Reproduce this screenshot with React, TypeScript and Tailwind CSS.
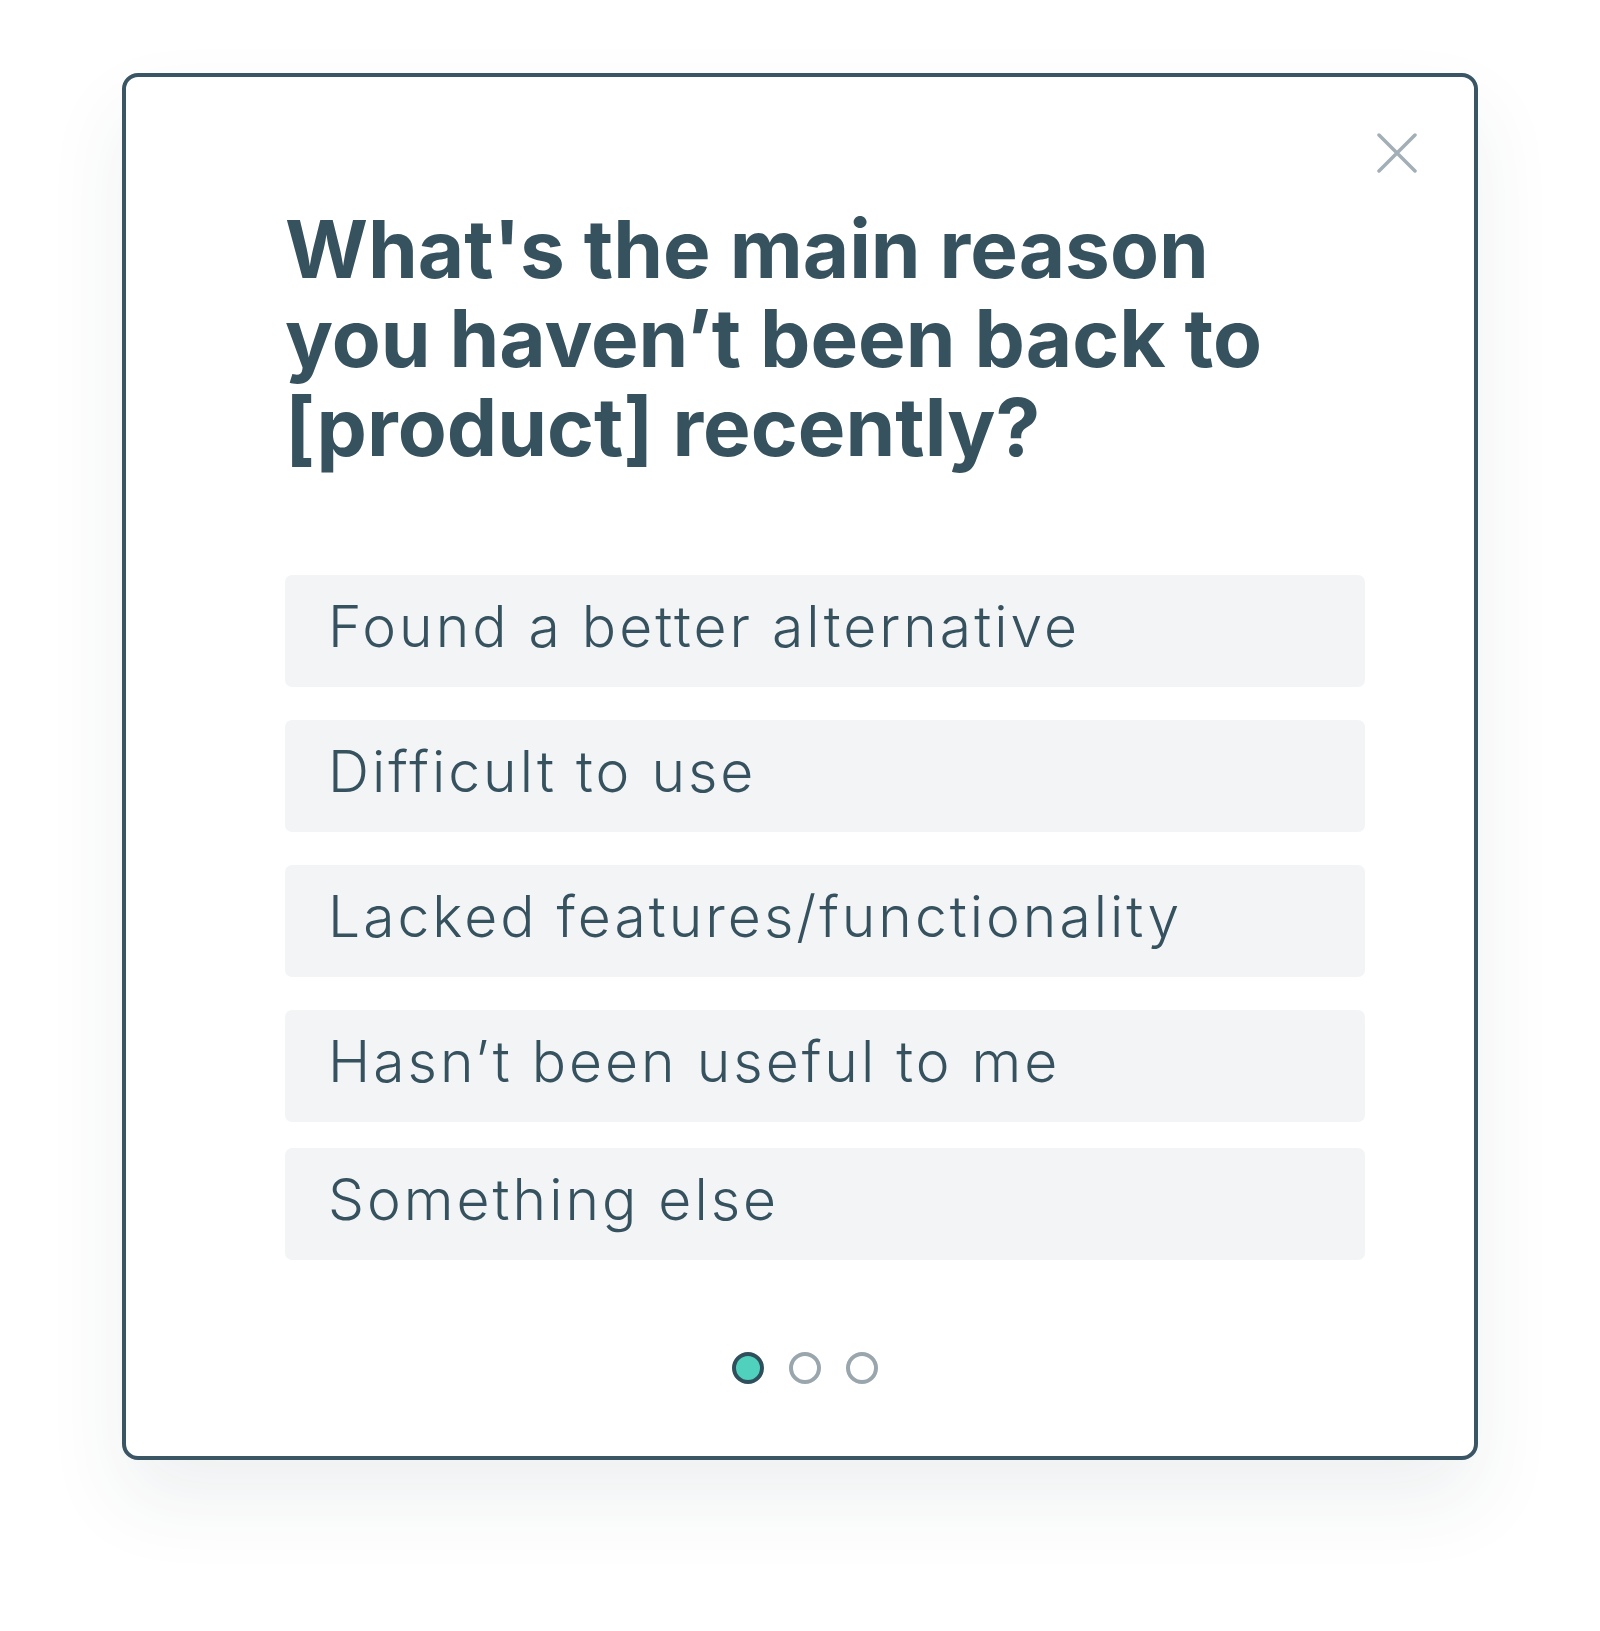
const options = [
  "Found a better alternative",
  "Difficult to use",
  "Lacked features/functionality",
  "Hasn’t been useful to me",
  "Something else",
];

const CloseIcon = () => (
  <svg width="40" height="40" viewBox="0 0 40 40" fill="none">
    <path
      d="M2 2L38 38M38 2L2 38"
      stroke="#a3afb6"
      strokeWidth="3.5"
      strokeLinecap="round"
    />
  </svg>
);

const App = () => {
  return (
    <div className="min-h-[1631px] w-full bg-white flex justify-center pt-[73px] font-['Inter',sans-serif]">
      <div className="w-[1356px] h-[1387px] rounded-[16px] border-[4px] border-[#3a5563] bg-white shadow-[0_40px_80px_rgba(40,60,80,0.08)] flex flex-col">
        <div className="flex justify-end pt-[56px] pr-[57px]">
          <CloseIcon />
        </div>

        <div className="pl-[159px]">
          <h1 className="mt-[31px] text-[80px] leading-[89px] font-bold text-[#36525f]">
            <span className="block">What's the main reason</span>
            <span className="block">you haven’t been back to</span>
            <span className="block">[product] recently?</span>
          </h1>

          <div className="mt-[104px] flex flex-col w-[1080px]">
            {options.map((opt, i) => (
              <button
                key={opt}
                className={`h-[112px] rounded-[7px] bg-[#f3f4f6] pl-[43px] pb-[8px] text-left text-[57px] font-light tracking-[3px] text-[#36525f] ${
                  i === 0 ? "" : i === 4 ? "mt-[26px]" : "mt-[33px]"
                }`}
              >
                {opt}
              </button>
            ))}
          </div>
        </div>

        <div className="mt-[92px] flex justify-center items-center gap-[25px] pl-[10px]">
          <span className="w-[32px] h-[32px] rounded-full border-[4px] border-[#2f4f5d] bg-[#4fd1bd]" />
          <span className="w-[32px] h-[32px] rounded-full border-[4px] border-[#9aa6ad] bg-white" />
          <span className="w-[32px] h-[32px] rounded-full border-[4px] border-[#9aa6ad] bg-white" />
        </div>
      </div>
    </div>
  );
};

export default App;
